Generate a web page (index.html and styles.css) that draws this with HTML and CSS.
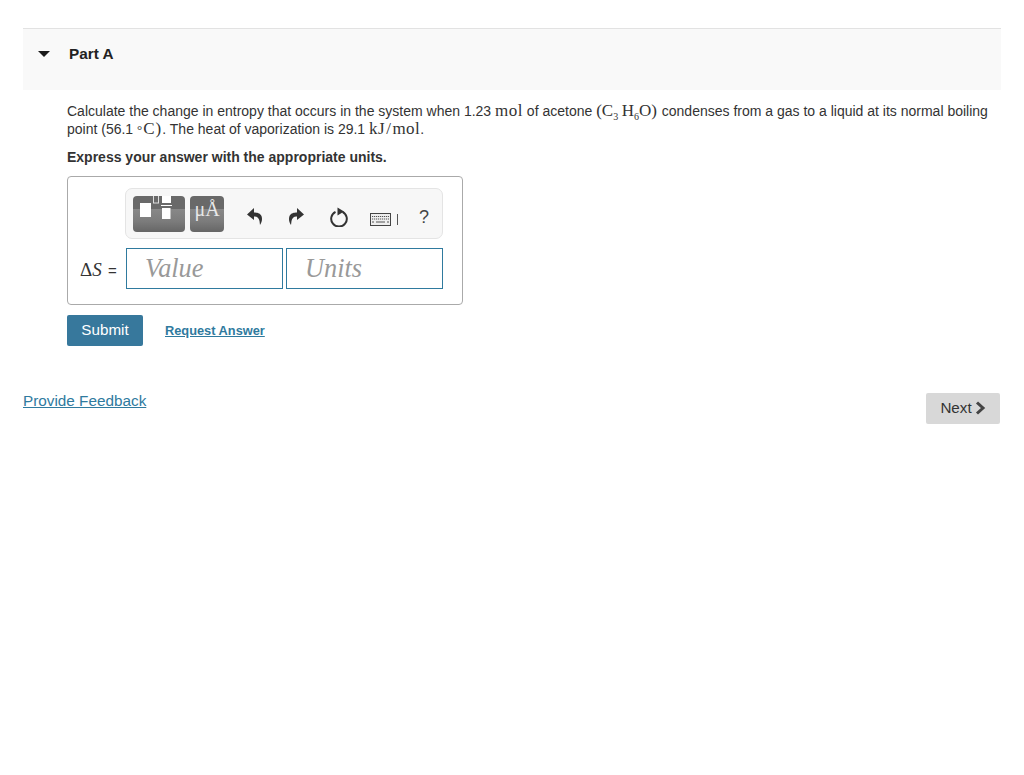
FILE: index.html
```html
<!DOCTYPE html>
<html lang="en">
<head>
<meta charset="utf-8">
<title>Part A</title>
<link rel="stylesheet" href="styles.css">
</head>
<body>
<div class="page">
  <section class="part">
    <header class="part-head">
      <svg class="caret" width="12" height="6" viewBox="0 0 12 6"><path d="M0 0H12L6 6Z" fill="#1a1a1a"/></svg>
      <h2 class="part-title">Part A</h2>
    </header>
    <div class="part-body">
      <p class="question">Calculate the change in entropy that occurs in the system when 1.23 <span class="m m-wide">mol</span> of acetone <span class="m">(C<sub>3</sub><span class="gap">H</span><sub>6</sub>O)</span> <span class="after-formula">condenses</span> from a gas to a liquid at its normal boiling point (56.1 <span class="deg">&#176;</span><span class="m m-temp">C)</span>. The heat of vaporization is 29.1 <span class="m m-wide">kJ<span class="slash">/</span>mol</span>.</p>
      <p class="instruction">Express your answer with the appropriate units.</p>
      <div class="answer-box">
        <div class="toolbar">
          <div class="tool-btn tool-template">
            <svg width="52" height="36" viewBox="0 0 52 36"><rect x="7" y="7" width="11" height="14" fill="#fff"/><rect x="20.500" y="-1" width="5" height="8" fill="none" stroke="#ddd" stroke-width="1"/><rect x="29" y="0" width="9" height="7" fill="#fff"/><rect x="28" y="9" width="11" height="1" fill="#fff"/><rect x="29" y="12" width="8.500" height="11" fill="#fff"/></svg>
          </div>
          <div class="tool-btn tool-units">&#956;&#197;</div>
          <svg class="tool-icon undo" width="15" height="17" viewBox="0 0 15 17"><path d="M7 0 0 6.500 7 12V8.500c3-.3 5 1.500 5.500 4.500l.5 4c2-3 2.500-6 1.500-9C13 5 10 4.500 7 4.500Z" fill="#333"/></svg>
          <svg class="tool-icon redo" width="15" height="17" viewBox="0 0 15 17"><path d="M8 0l7 6.500L8 12V8.500c-3-.3-5 1.500-5.500 4.500L2 17C0 14-.5 11 .5 8 2 5 5 4.500 8 4.500Z" fill="#333"/></svg>
          <svg class="tool-icon reset" width="18" height="20" viewBox="0 0 18 20"><path d="M5.500 4.800A7.800 7.800 0 1 0 12.500 4.800" fill="none" stroke="#333" stroke-width="2"/><path d="M7.500 0.500 14 4.500 7.500 8.500Z" fill="#333"/></svg>
          <svg class="tool-icon keyboard" width="21" height="13" viewBox="0 0 21 13"><rect x=".5" y=".5" width="20" height="12" fill="#eee" stroke="#444"/><path d="M2 3.500h17M2 6h17" stroke="#555" stroke-dasharray="1.200 .8"/><path d="M2 9h2M6 9h9M17 9h2" stroke="#555"/></svg>
          <span class="tool-sep"></span>
          <span class="tool-help">?</span>
        </div>
        <div class="input-row">
          <span class="var-label"><span class="m">&#916;<i>S</i></span> =</span>
          <div class="field">Value</div>
          <div class="field field-units">Units</div>
        </div>
      </div>
      <div class="actions">
        <button class="submit" type="button">Submit</button>
        <a class="request" href="#">Request Answer</a>
      </div>
    </div>
  </section>
  <footer class="foot">
    <a class="feedback" href="#">Provide Feedback</a>
    <button class="next" type="button">Next
      <svg width="11" height="14" viewBox="0 0 11 14"><path d="M2 1.500 8 7 2 12.500" fill="none" stroke="#444" stroke-width="3"/></svg>
    </button>
  </footer>
</div>
</body>
</html>
```
FILE: styles.css
```css
* { box-sizing: border-box; }
body {
  margin: 0;
  background: #fff;
  color: #333;
  font-family: "Liberation Sans", Arial, sans-serif;
  font-size: 14px;
}
.page { padding: 28px 23px 0; }
.part { border-top: 1px solid #e2e2e2; }
.part-head {
  display: flex;
  align-items: center;
  height: 61px;
  padding: 0 0 12px 15px;
  background: #f9f9f9;
}
.caret { margin-top: 1px; }
.part-title {
  margin: 0 0 0 19px;
  font-size: 15.300px;
  font-weight: bold;
  color: #222;
}
.part-body { padding: 12px 0 0 44px; }
.question {
  margin: 0;
  width: 925px;
  line-height: 18px;
  font-size: 14px;
  color: #333;
}
.m {
  font-family: "Liberation Serif", "Times New Roman", serif;
  font-size: 17px;
  line-height: 1;
}
.m-wide { letter-spacing: .5px; }
.m-temp { letter-spacing: 1px; margin-left: 1px; }
.gap { margin-left: 3.500px; }
.after-formula { margin-left: 1px; }
.slash { margin: 0 1px; }
.m sub { font-size: 10px; line-height: 0; }
.deg {
  font-family: "Liberation Serif", serif;
  font-size: 13px;
  line-height: 1;
}
.instruction {
  margin: 10px 0 0;
  line-height: 18px;
  font-weight: bold;
  color: #333;
}
.answer-box {
  width: 396px;
  height: 129px;
  margin-top: 10px;
  padding: 11px 19px 0 57px;
  border: 1px solid #aaa;
  border-radius: 4px;
}
.toolbar {
  display: flex;
  align-items: center;
  width: 318px;
  height: 51px;
  padding-left: 7px;
  background: #f7f7f7;
  border: 1px solid #e4e4e4;
  border-radius: 7px;
}
.tool-btn {
  height: 36px;
  border-radius: 4px;
  overflow: hidden;
  background: linear-gradient(#696969 0, #696969 36%, #888 36%, #7c7c7c 70%, #666 100%);
}
.tool-template { width: 52px; }
.tool-template svg { display: block; }
.tool-units {
  width: 34px;
  margin-left: 5px;
  text-align: center;
  font-family: "Liberation Serif", serif;
  font-size: 20px;
  line-height: 26px;
  color: #e8e8e8;
}
.tool-icon { flex: none; }
.undo { margin: 6px 0 0 23px; }
.redo { margin: 6px 0 0 27px; }
.reset { margin: 7px 0 0 26px; }
.keyboard { margin: 12px 0 0 22px; }
.tool-sep {
  width: 1px;
  height: 11px;
  margin: 12px 0 0 6px;
  background: #555;
}
.tool-help {
  margin: 8px 0 0 21px;
  font-size: 18px;
  color: #444;
}
.input-row {
  display: flex;
  align-items: center;
  margin: 9px 0 0 -45px;
  height: 41px;
}
.var-label {
  width: 46px;
  margin-top: 2px;
  font-size: 15px;
  color: #333;
  white-space: nowrap;
}
.var-label .m { font-size: 19px; }
.var-label i { margin-right: 2px; }
.field {
  flex: none;
  width: 157px;
  height: 41px;
  padding-left: 18px;
  border: 1px solid #2f7a9e;
  font-family: "Liberation Serif", serif;
  font-style: italic;
  font-size: 26.300px;
  line-height: 39px;
  color: #999;
}
.field-units { margin-left: 3px; }
.actions {
  display: flex;
  align-items: center;
  margin-top: 10px;
}
.submit {
  width: 76px;
  height: 31px;
  padding: 0 0 2px;
  border: 0;
  border-radius: 2px;
  background: #37789c;
  color: #fff;
  font: 15.200px "Liberation Sans", Arial, sans-serif;
}
.request {
  margin-left: 22px;
  font-size: 12.800px;
  font-weight: bold;
  color: #2f7a9e;
}
.foot {
  display: flex;
  justify-content: space-between;
  align-items: flex-start;
  margin-top: 46px;
  padding-right: 1px;
}
.feedback {
  font-size: 15.300px;
  line-height: 17px;
  color: #2f7a9e;
}
.next {
  display: flex;
  align-items: center;
  justify-content: center;
  gap: 3px;
  width: 74px;
  height: 31px;
  margin-top: 1px;
  padding: 0 0 2px;
  border: 0;
  border-radius: 2px;
  background: #d8d8d8;
  color: #333;
  font: 15.200px "Liberation Sans", Arial, sans-serif;
}
```
